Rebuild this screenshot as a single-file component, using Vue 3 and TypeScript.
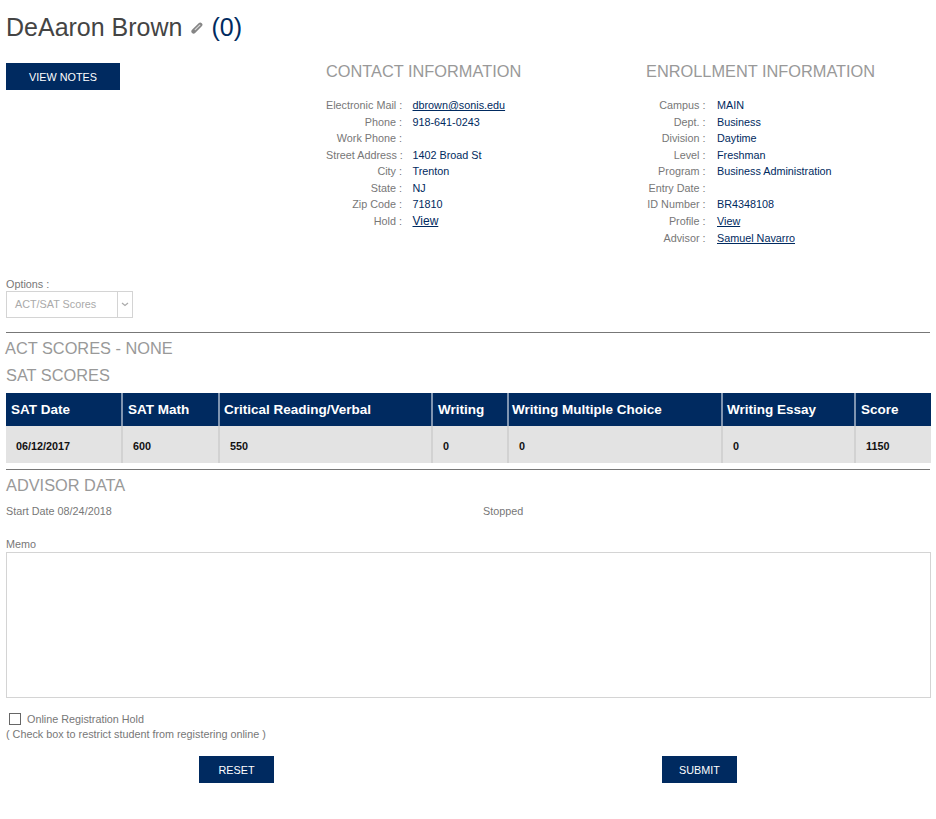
<script setup lang="ts">
const contact: [string, string, boolean][] = [
  ['Electronic Mail :', 'dbrown@sonis.edu', true],
  ['Phone :', '918-641-0243', false],
  ['Work Phone :', '', false],
  ['Street Address :', '1402 Broad St', false],
  ['City :', 'Trenton', false],
  ['State :', 'NJ', false],
  ['Zip Code :', '71810', false],
  ['Hold :', 'View', true],
]
const enrollment: [string, string, boolean][] = [
  ['Campus :', 'MAIN', false],
  ['Dept. :', 'Business', false],
  ['Division :', 'Daytime', false],
  ['Level :', 'Freshman', false],
  ['Program :', 'Business Administration', false],
  ['Entry Date :', '', false],
  ['ID Number :', 'BR4348108', false],
  ['Profile :', 'View', true],
  ['Advisor :', 'Samuel Navarro', true],
]
const cols: [string, string, number][] = [
  ['SAT Date', '06/12/2017', 116],
  ['SAT Math', '600', 97],
  ['Critical Reading/Verbal', '550', 213],
  ['Writing', '0', 76],
  ['Writing Multiple Choice', '0', 214],
  ['Writing Essay', '0', 133],
  ['Score', '1150', 76],
]
</script>

<template>
  <div class="page">
    <h1 class="title">
      <span>DeAaron Brown</span>
      <svg class="clip" width="12" height="12" viewBox="0 0 12 12" aria-hidden="true">
        <path d="M2.6 9.4 9.2 2.8" fill="none" stroke="#858585" stroke-width="4.4" stroke-linecap="round" />
        <path d="M4.2 7.6 8.8 3.1" fill="none" stroke="#d8d8d8" stroke-width="1.3" stroke-linecap="round" />
      </svg>
      <span class="count">(0)</span>
    </h1>

    <div class="top">
      <div class="left"><button class="btn notes" type="button">VIEW NOTES</button></div>
      <section class="info contact">
        <h2 class="heading">CONTACT INFORMATION</h2>
        <div class="rows">
          <div v-for="r in contact" :key="r[0]" class="row">
            <span class="lab">{{ r[0] }}</span>
            <a v-if="r[2]" class="val link" href="#">{{ r[1] }}</a>
            <span v-else class="val">{{ r[1] }}</span>
          </div>
        </div>
      </section>
      <section class="info enroll">
        <h2 class="heading">ENROLLMENT INFORMATION</h2>
        <div class="rows">
          <div v-for="r in enrollment" :key="r[0]" class="row">
            <span class="lab">{{ r[0] }}</span>
            <a v-if="r[2]" class="val link" href="#">{{ r[1] }}</a>
            <span v-else class="val">{{ r[1] }}</span>
          </div>
        </div>
      </section>
    </div>

    <div class="options">
      <div class="small">Options :</div>
      <div class="select">
        <span class="sel-text">ACT/SAT Scores</span>
        <span class="sel-arrow">
          <svg width="8" height="5" viewBox="0 0 8 5" aria-hidden="true"><path d="M1 1l3 2.5L7 1" fill="none" stroke="#aaa" stroke-width="1.2" /></svg>
        </span>
      </div>
    </div>

    <hr class="rule first" />
    <h2 class="heading act">ACT SCORES - NONE</h2>
    <h2 class="heading sat">SAT SCORES</h2>

    <table class="scores">
      <thead>
        <tr><th v-for="c in cols" :key="c[0]" :style="{ width: c[2] + 'px' }">{{ c[0] }}</th></tr>
      </thead>
      <tbody>
        <tr><td v-for="c in cols" :key="c[0]">{{ c[1] }}</td></tr>
      </tbody>
    </table>

    <hr class="rule second" />
    <h2 class="heading advisor">ADVISOR DATA</h2>
    <div class="dates small">
      <span class="start">Start Date 08/24/2018</span>
      <span>Stopped</span>
    </div>
    <div class="small memo-label">Memo</div>
    <textarea class="memo"></textarea>

    <label class="hold small">
      <span class="box"></span>
      <span>Online Registration Hold</span>
    </label>
    <div class="small hint">( Check box to restrict student from registering online )</div>

    <div class="actions">
      <button class="btn" type="button">RESET</button>
      <button class="btn" type="button">SUBMIT</button>
    </div>
  </div>
</template>

<style scoped>
.page {
  box-sizing: border-box;
  width: 936px;
  height: 819px;
  padding: 0 5px 0 6px;
  overflow: hidden;
  font-family: "Liberation Sans", Arial, sans-serif;
  font-size: 10.8px;
  color: #777;
}
.title {
  display: flex;
  align-items: center;
  height: 29px;
  margin: 13px 0 0;
  font-size: 25px;
  font-weight: 400;
  line-height: 29px;
  color: #444;
}
.clip { flex: none; margin: 1px 0 0 9px; }
.count { margin-left: 8px; color: #002a60; }
.top {
  display: flex;
  height: 235px;
}
.left { flex: none; width: 320px; padding-top: 21px; }
.btn {
  display: block;
  width: 75px;
  height: 27px;
  padding: 0;
  border: 0;
  background: #002a60;
  color: #fff;
  font: 10.8px "Liberation Sans", Arial, sans-serif;
}
.notes { width: 114px; }
.info { flex: none; width: 320px; padding-top: 20px; }
.enroll { width: 279px; }
.heading {
  margin: 0;
  font-size: 16.35px;
  line-height: 18px;
  font-weight: 400;
  color: #999;
}
.rows { margin-top: 17.15px; }
.row {
  display: flex;
  height: 16.55px;
  line-height: 16.55px;
}
.lab { text-align: right; color: #777; flex: none; white-space: nowrap; }
.contact .lab { width: 76px; }
.contact .val { margin-left: 10.5px; }
.contact .row:last-child .link { font-size: 12px; }
.enroll .lab { width: 59.5px; }
.enroll .val { margin-left: 11.5px; }
.val { color: #002a60; }
.link { color: #002a60; text-decoration: underline; }
.small { font-size: 10.8px; line-height: 14px; color: #777; }
.select {
  display: flex;
  box-sizing: border-box;
  width: 127px;
  height: 27px;
  border: 1px solid #d4d4d4;
}
.sel-text { flex: 1; padding-left: 8px; line-height: 25px; font-size: 10.8px; color: #aaa; }
.sel-arrow {
  display: flex;
  align-items: center;
  justify-content: center;
  width: 14px;
  border-left: 1px solid #d4d4d4;
}
.rule {
  width: 924px;
  height: 1px;
  margin: 0;
  border: 0;
  background: #777;
}
.first { margin-top: 14px; }
.heading.act { margin-top: 6px; margin-left: -1px; }
.heading.sat { margin-top: 9px; }
.scores {
  width: 925px;
  margin-top: 9px;
  border-collapse: collapse;
  table-layout: fixed;
}
.scores th {
  box-sizing: border-box;
  height: 33px;
  padding: 0 0 0 5px;
  background: #002a60;
  color: #fff;
  font-size: 13.5px;
  text-align: left;
  border-right: 2px solid #7f94b0;
}
.scores th:nth-child(3), .scores th:nth-child(6) { padding-left: 4px; }
.scores th:nth-child(5) { padding-left: 3px; }
.scores td {
  box-sizing: border-box;
  height: 37px;
  padding: 2px 0 0 10px;
  background: #e3e3e3;
  color: #111;
  font-size: 10.8px;
  font-weight: 700;
  border-right: 2px solid #d2d2d2;
}
.scores th:last-child, .scores td:last-child { border-right: 0; }
.second { margin-top: 6px; }
.heading.advisor { margin-top: 6px; }
.dates { display: flex; margin-top: 10px; }
.start { width: 477px; }
.memo-label { margin-top: 19px; }
.memo {
  display: block;
  box-sizing: border-box;
  width: 925px;
  height: 146px;
  margin: 1px 0 0;
  padding: 0;
  border: 1px solid #d4d4d4;
  resize: none;
  outline: 0;
}
.hold {
  display: flex;
  align-items: center;
  height: 14px;
  margin-top: 14px;
  padding-left: 3px;
}
.box {
  box-sizing: border-box;
  width: 12px;
  height: 12px;
  margin-right: 6px;
  border: 1px solid #666;
}
.hint { margin-top: 1px; }
.actions {
  display: flex;
  margin-top: 15px;
  padding-left: 193px;
  gap: 388px;
}
</style>
